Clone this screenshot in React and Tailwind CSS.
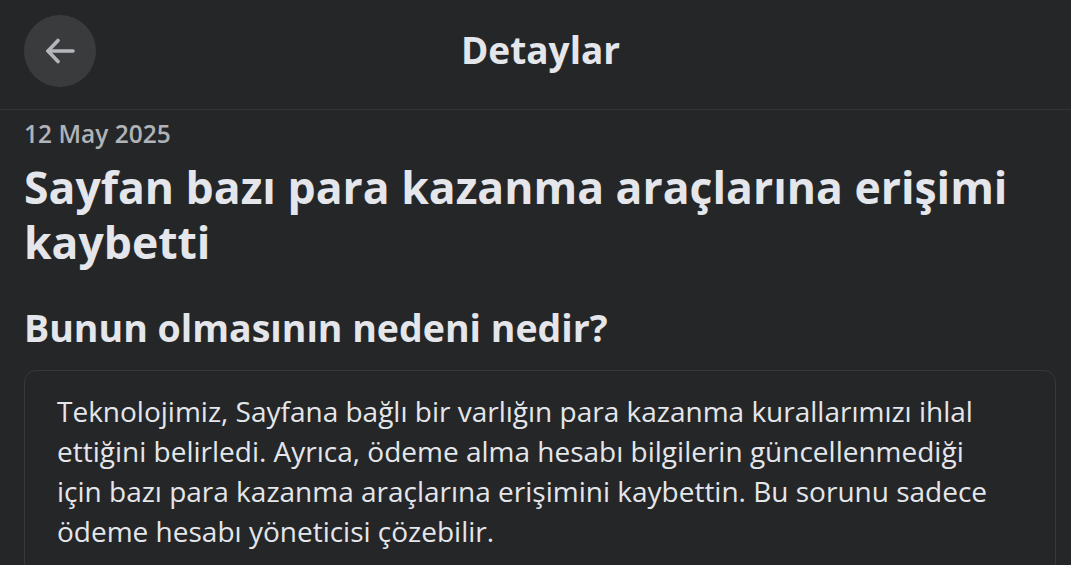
import React from "react";

export default function App() {
  return (
    <div
      className="w-[1071px] h-[565px] overflow-hidden bg-[#252628] text-[#e4e6eb]"
      style={{ fontFamily: '"Open Sans", "Noto Sans", sans-serif' }}
    >
      <header className="relative flex h-[110px] items-center border-b border-[#333436] px-6 pb-[8px]">
        <button className="flex h-[72px] w-[72px] items-center justify-center rounded-full bg-[#3a3b3d]">
          <svg width="32" height="26" viewBox="0 0 32 26" fill="none" stroke="#b4b6bb" strokeWidth="3.6" strokeLinecap="round" strokeLinejoin="round">
            <path d="M4 13H29" />
            <path d="M14 2.5L4 13l10 10.5" />
          </svg>
        </button>
        <h1 className="pointer-events-none absolute left-0 right-0 top-[26px] pl-[10px] text-center text-[37px] font-bold leading-[48px]">
          Detaylar
        </h1>
      </header>

      <main className="pl-6 pr-[15px]">
        <div className="pt-2 text-[24.5px] font-semibold leading-[32px] text-[#b0b3b8]">
          12 May 2025
        </div>
        <h2 className="mt-[9px] text-[44.5px] font-bold leading-[55px]">
          Sayfan bazı para kazanma araçlarına erişimi kaybetti
        </h2>
        <h3 className="mt-[35px] text-[37.5px] font-bold leading-[48px]">
          Bunun olmasının nedeni nedir?
        </h3>
        <div className="mt-[18px] rounded-xl border border-[#37383a] px-8 pt-5 pb-6">
          <p className="whitespace-nowrap text-[28px] leading-[40px] text-[#e4e6eb]">
            <span className="block">Teknolojimiz, Sayfana bağlı bir varlığın para kazanma kurallarımızı ihlal</span>
            <span className="block">ettiğini belirledi. Ayrıca, ödeme alma hesabı bilgilerin güncellenmediği</span>
            <span className="block">için bazı para kazanma araçlarına erişimini kaybettin. Bu sorunu sadece</span>
            <span className="block">ödeme hesabı yöneticisi çözebilir.</span>
          </p>
        </div>
      </main>
    </div>
  );
}
